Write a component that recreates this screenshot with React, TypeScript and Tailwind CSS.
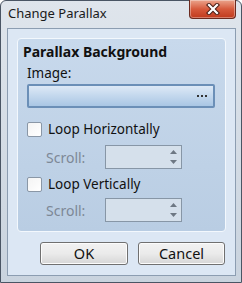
function CloseButton() {
  return (
    <div className="w-[47px] h-[19px] rounded-b-[4px] border border-t-0 border-[#6b2a1f] bg-gradient-to-b from-[#eaa48c] via-[#d65a3c] to-[#c0391c] flex items-center justify-center shadow-[inset_0_0_0_1px_rgba(255,255,255,0.35)]">
      <svg width="14" height="12" viewBox="0 0 14 12">
        <path d="M3 2 L11 10 M11 2 L3 10" stroke="#4a1e16" strokeWidth="4.2" strokeLinecap="square" />
        <path d="M3 2 L11 10 M11 2 L3 10" stroke="#ffffff" strokeWidth="2.2" strokeLinecap="square" />
      </svg>
    </div>
  );
}

function Checkbox({ label }: { label: string }) {
  return (
    <div className="h-[15px] flex items-center">
      <div className="w-[15px] h-[15px] rounded-[2px] border border-[#8a97a6] bg-gradient-to-br from-[#f4f4f4] to-[#ffffff]" />
      <span className="ml-[6px] text-[13.5px] text-[#111]">{label}</span>
    </div>
  );
}

function ScrollRow({ mt }: { mt: string }) {
  return (
    <div className={`${mt} h-[24px] flex items-center`}>
      <span className="ml-[19px] w-[59px] text-[14px] text-[#7d8896]">Scroll:</span>
      <div className="w-[77px] h-[24px] border border-[#8796a6] bg-[#d5e0eb] flex justify-end items-center pr-[4px]">
        <div className="flex flex-col items-center gap-[6px]">
          <svg width="7" height="4" viewBox="0 0 7 4">
            <path d="M0 4 L3.5 0 L7 4 Z" fill="#6e7883" />
          </svg>
          <svg width="7" height="4" viewBox="0 0 7 4">
            <path d="M0 0 L3.5 4 L7 0 Z" fill="#6e7883" />
          </svg>
        </div>
      </div>
    </div>
  );
}

function Button({ label, w }: { label: string; w: string }) {
  return (
    <div className={`${w} h-[23px] rounded-[3px] border border-[#707070] bg-gradient-to-b from-[#f2f2f2] via-[#ebebeb] to-[#d6d6d6] shadow-[inset_0_0_0_1px_#fcfcfc] flex items-center justify-center text-[14.5px] text-[#111]`}>
      {label}
    </div>
  );
}

export default function App() {
  return (
    <div className="w-[242px] h-[283px] rounded-t-[6px] border border-[#4a5564] bg-gradient-to-b from-[#dfe5ec] to-[#c9d3de] flex flex-col" style={{ fontFamily: '"Noto Sans", sans-serif' }}>
      <div className="h-[27px] flex items-start justify-between">
        <span className="ml-[7px] mt-[3px] text-[13px] text-[#1a1a1a]">Change Parallax</span>
        <div className="mr-[5px] -mt-px">
          <CloseButton />
        </div>
      </div>
      <div className="ml-[6px] w-[229px] h-[248px] border border-[#8c9db1] bg-[#dce7f4] pt-[9px] pb-[10px] px-[9px] flex flex-col">
        <div className="w-[209px] h-[194px] rounded-[4px] border border-[#f3f8fd] bg-gradient-to-b from-[#c8d9ec] to-[#b9cde3] flex flex-col pl-[9px] pr-[10px] pb-[9px]">
          <div className="h-[24px] -ml-[4px] flex items-center text-[14px] font-bold text-[#111]">Parallax Background</div>
          <div className="h-[21px] flex items-center text-[13.5px] text-[#111]">Image:</div>
          <div className="h-[24px] w-[188px] rounded-[2px] border-2 border-[#6b8fb7] bg-gradient-to-b from-[#dde9f6] to-[#a9c6e4] flex items-center justify-end pr-[6px]">
            <div className="flex gap-[2px]">
              <div className="w-[2px] h-[2px] bg-[#333]" />
              <div className="w-[2px] h-[2px] bg-[#333]" />
              <div className="w-[2px] h-[2px] bg-[#333]" />
            </div>
          </div>
          <div className="mt-[14px]">
            <Checkbox label="Loop Horizontally" />
          </div>
          <ScrollRow mt="mt-[8px]" />
          <div className="mt-[8px]">
            <Checkbox label="Loop Vertically" />
          </div>
          <ScrollRow mt="mt-[6px]" />
        </div>
        <div className="mt-[10px] flex justify-end gap-[10px] pr-[1px]">
          <Button label="OK" w="w-[88px]" />
          <Button label="Cancel" w="w-[87px]" />
        </div>
      </div>
    </div>
  );
}
